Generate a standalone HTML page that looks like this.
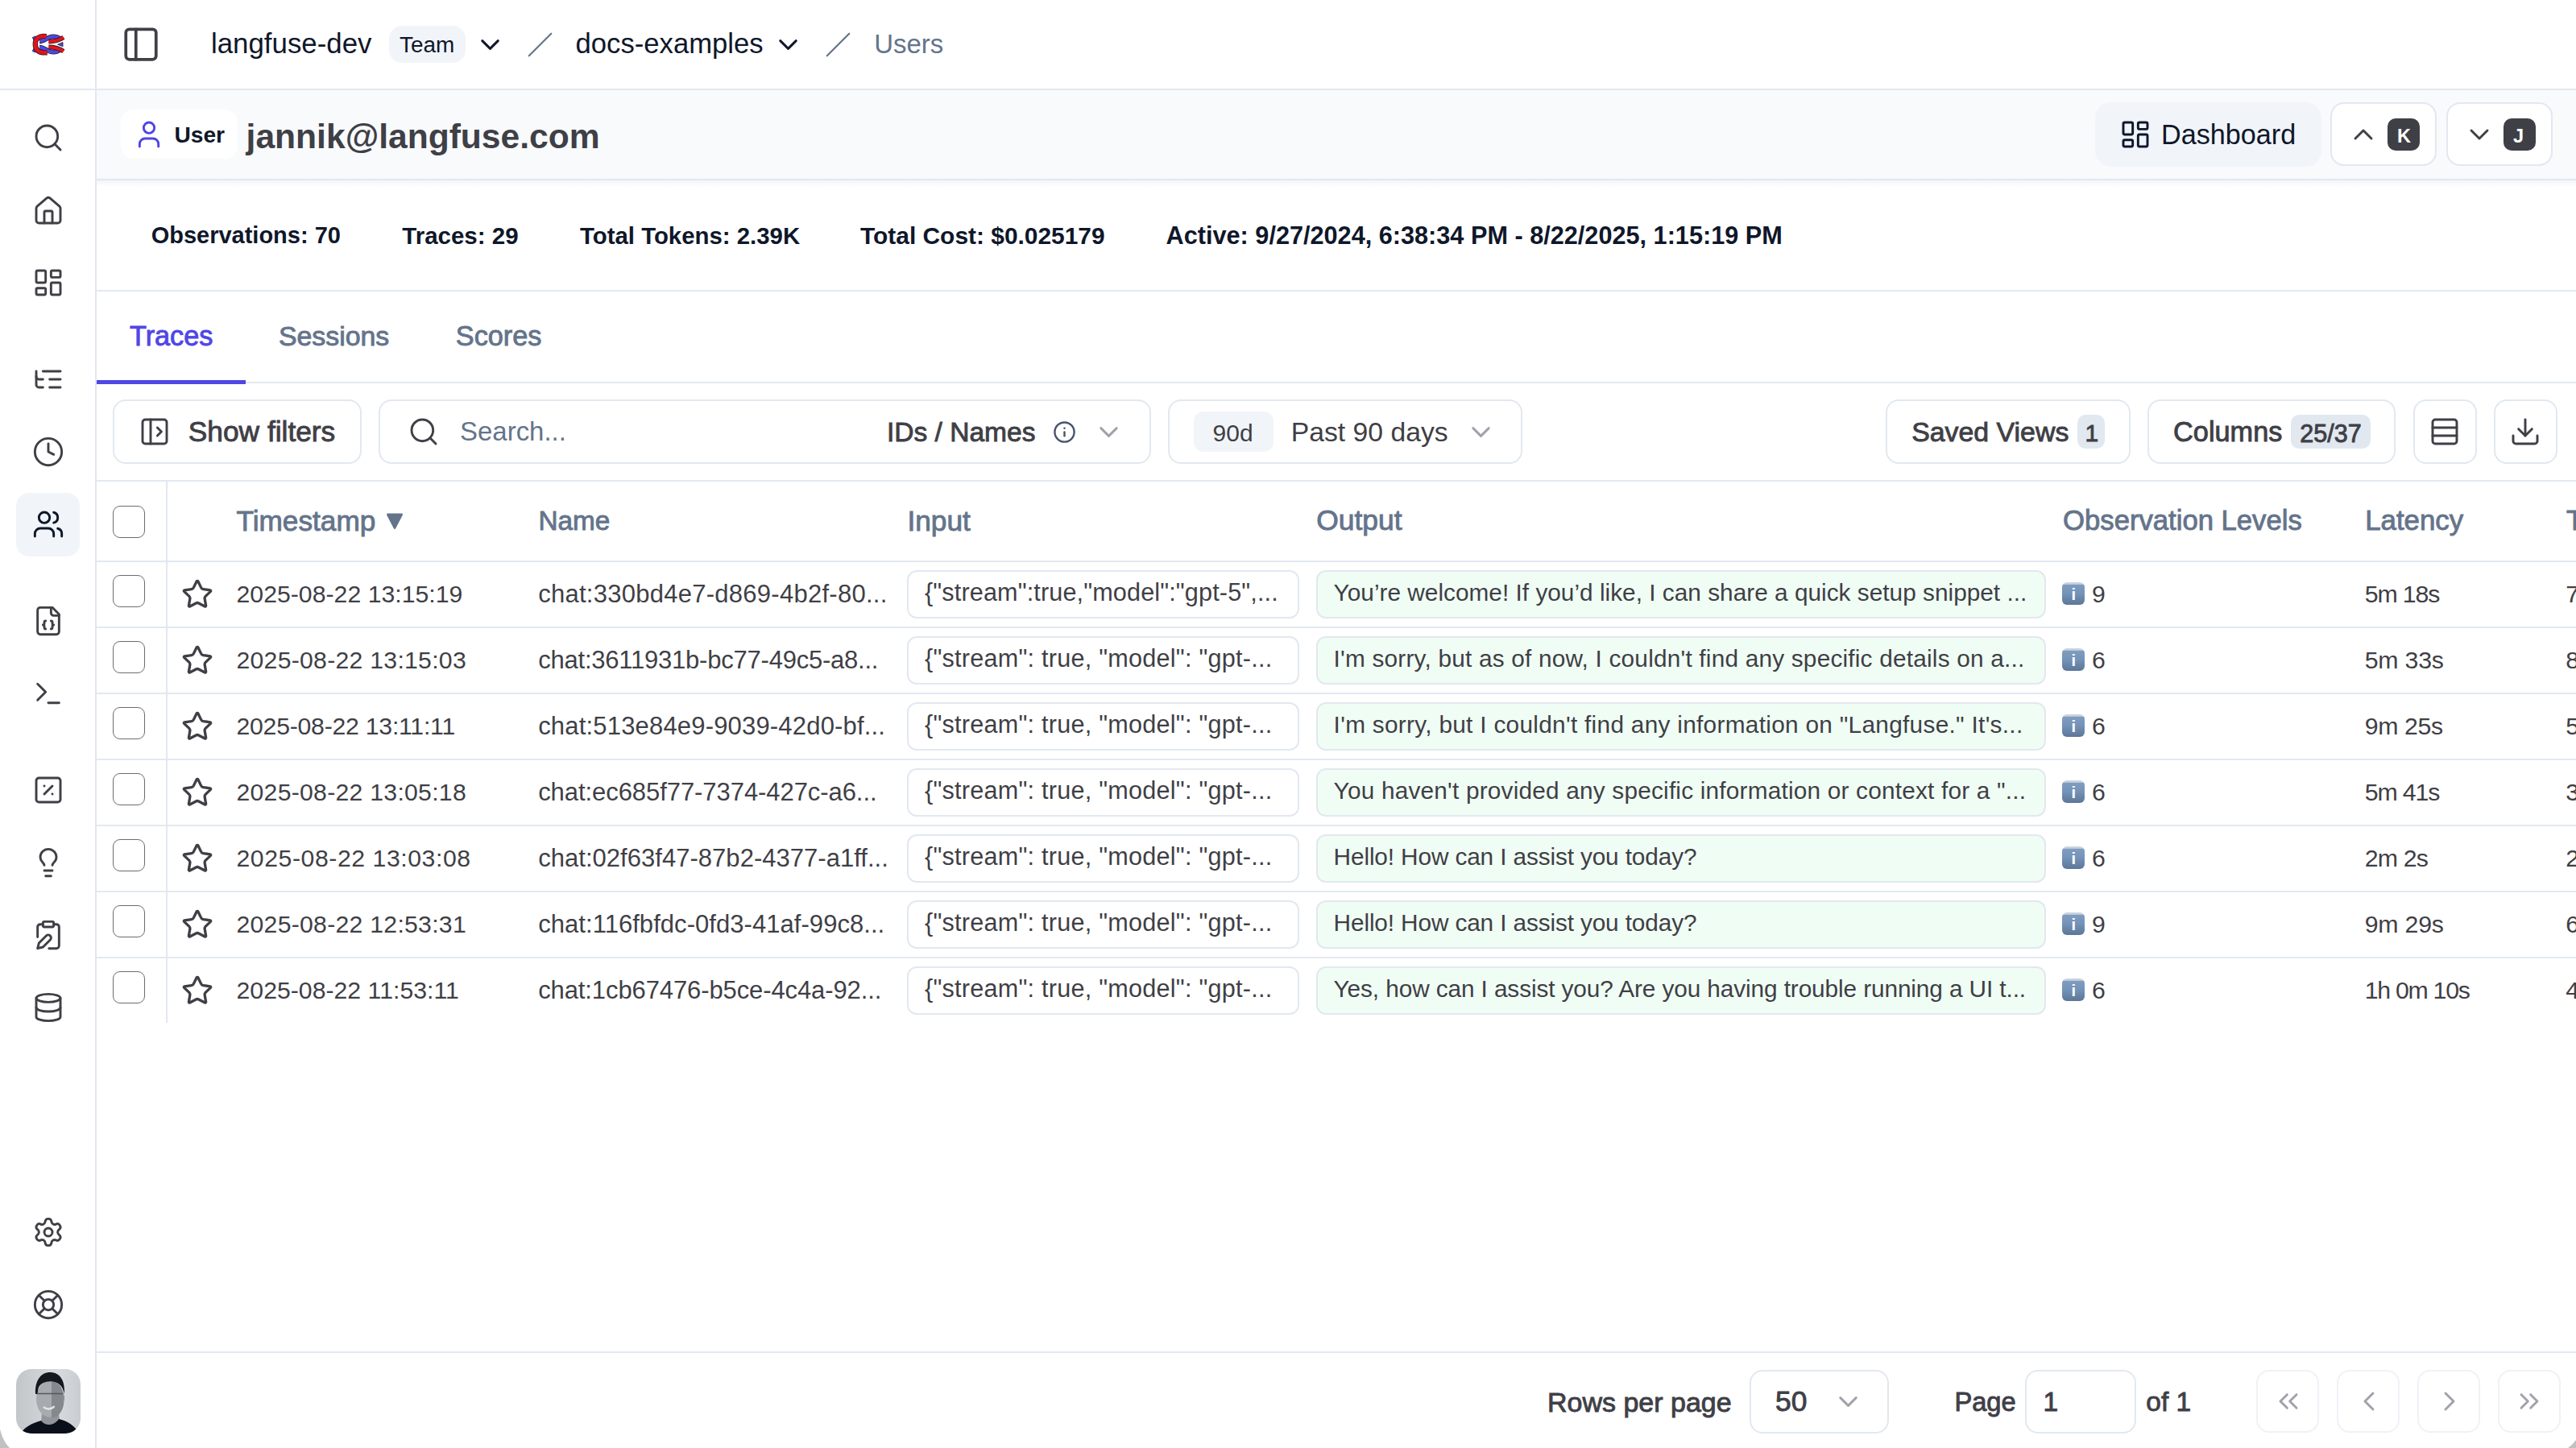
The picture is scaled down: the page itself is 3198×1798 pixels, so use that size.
<!DOCTYPE html>
<html><head><meta charset="utf-8"><title>Langfuse - Users</title>
<style>
html,body{margin:0;padding:0;background:#fff;}
body{width:3198px;height:1798px;position:relative;overflow:hidden;font-family:"Liberation Sans", sans-serif;}
.t{position:absolute;white-space:pre;line-height:1;}
.b{position:absolute;}
.i{position:absolute;overflow:visible;}
@media (max-width:2400px){html{zoom:0.5;}}
</style></head><body>
<div class="b" style="left:118.0px;top:0.0px;width:2.0px;height:1798.0px;background:#e2e8f0"></div>
<div class="b" style="left:0.0px;top:110.0px;width:3198.0px;height:2.0px;background:#e2e8f0"></div>
<div class="b" style="left:120.0px;top:112.0px;width:3078.0px;height:110.0px;background:#f8fafc"></div>
<div class="b" style="left:120.0px;top:222.0px;width:3078.0px;height:2.0px;background:#e2e8f0"></div>
<div class="b" style="left:120.0px;top:224.0px;width:3078.0px;height:8.0px;background:linear-gradient(rgba(226,232,240,0.45),rgba(255,255,255,0))"></div>
<div class="b" style="left:120.0px;top:360.0px;width:3078.0px;height:2.0px;background:#e2e8f0"></div>
<div class="b" style="left:120.0px;top:474.0px;width:3078.0px;height:2.0px;background:#e2e8f0"></div>
<div class="b" style="left:120.0px;top:472.0px;width:185.0px;height:5.0px;background:#4f46e5"></div>
<div class="b" style="left:120.0px;top:596.0px;width:3078.0px;height:2.0px;background:#e2e8f0"></div>
<div class="b" style="left:206.0px;top:598.0px;width:2.0px;height:672.0px;background:#e2e8f0"></div>
<div class="b" style="left:120.0px;top:696.0px;width:3078.0px;height:2.0px;background:#e2e8f0"></div>
<div class="b" style="left:120.0px;top:778.0px;width:3078.0px;height:2.0px;background:#e2e8f0"></div>
<div class="b" style="left:120.0px;top:860.0px;width:3078.0px;height:2.0px;background:#e2e8f0"></div>
<div class="b" style="left:120.0px;top:942.0px;width:3078.0px;height:2.0px;background:#e2e8f0"></div>
<div class="b" style="left:120.0px;top:1024.0px;width:3078.0px;height:2.0px;background:#e2e8f0"></div>
<div class="b" style="left:120.0px;top:1106.0px;width:3078.0px;height:2.0px;background:#e2e8f0"></div>
<div class="b" style="left:120.0px;top:1188.0px;width:3078.0px;height:2.0px;background:#e2e8f0"></div>
<div class="b" style="left:120.0px;top:1678.0px;width:3078.0px;height:2.0px;background:#e2e8f0"></div>
<svg class="i" style="left:40.0px;top:151.0px;" width="40" height="40" viewBox="0 0 24 24" fill="none" stroke="#3f3f46" stroke-width="1.75" stroke-linecap="round" stroke-linejoin="round"><circle cx="11" cy="11" r="8"/><path d="m21 21-4.3-4.3"/></svg>
<svg class="i" style="left:40.0px;top:242.0px;" width="40" height="40" viewBox="0 0 24 24" fill="none" stroke="#3f3f46" stroke-width="1.75" stroke-linecap="round" stroke-linejoin="round"><path d="M15 21v-8a1 1 0 0 0-1-1h-4a1 1 0 0 0-1 1v8"/><path d="M3 10a2 2 0 0 1 .709-1.528l7-5.999a2 2 0 0 1 2.582 0l7 5.999A2 2 0 0 1 21 10v9a2 2 0 0 1-2 2H5a2 2 0 0 1-2-2z"/></svg>
<svg class="i" style="left:40.0px;top:331.0px;" width="40" height="40" viewBox="0 0 24 24" fill="none" stroke="#3f3f46" stroke-width="1.75" stroke-linecap="round" stroke-linejoin="round"><rect width="7" height="9" x="3" y="3" rx="1"/><rect width="7" height="5" x="14" y="3" rx="1"/><rect width="7" height="9" x="14" y="12" rx="1"/><rect width="7" height="5" x="3" y="16" rx="1"/></svg>
<svg class="i" style="left:40.0px;top:451.0px;" width="40" height="40" viewBox="0 0 24 24" fill="none" stroke="#3f3f46" stroke-width="1.75" stroke-linecap="round" stroke-linejoin="round"><path d="M21 12h-8"/><path d="M21 6H8"/><path d="M21 18h-8"/><path d="M3 6v4c0 1.1.9 2 2 2h3"/><path d="M3 10v6c0 1.1.9 2 2 2h3"/></svg>
<svg class="i" style="left:40.0px;top:541.0px;" width="40" height="40" viewBox="0 0 24 24" fill="none" stroke="#3f3f46" stroke-width="1.75" stroke-linecap="round" stroke-linejoin="round"><circle cx="12" cy="12" r="10"/><polyline points="12 6 12 12 16 14"/></svg>
<div class="b" style="left:20.0px;top:612.0px;width:79.0px;height:79.0px;background:#f1f5f9;border-radius:16px"></div>
<svg class="i" style="left:40.0px;top:631.0px;" width="40" height="40" viewBox="0 0 24 24" fill="none" stroke="#0f172a" stroke-width="1.75" stroke-linecap="round" stroke-linejoin="round"><path d="M16 21v-2a4 4 0 0 0-4-4H6a4 4 0 0 0-4 4v2"/><circle cx="9" cy="7" r="4"/><path d="M22 21v-2a4 4 0 0 0-3-3.87"/><path d="M16 3.13a4 4 0 0 1 0 7.75"/></svg>
<svg class="i" style="left:40.0px;top:751.0px;" width="40" height="40" viewBox="0 0 24 24" fill="none" stroke="#3f3f46" stroke-width="1.75" stroke-linecap="round" stroke-linejoin="round"><path d="M15 2H6a2 2 0 0 0-2 2v16a2 2 0 0 0 2 2h12a2 2 0 0 0 2-2V7Z"/><path d="M14 2v4a2 2 0 0 0 2 2h4"/><path d="M10 12a1 1 0 0 0-1 1v1a1 1 0 0 1-1 1 1 1 0 0 1 1 1v1a1 1 0 0 0 1 1"/><path d="M14 18a1 1 0 0 0 1-1v-1a1 1 0 0 1 1-1 1 1 0 0 1-1-1v-1a1 1 0 0 0-1-1"/></svg>
<svg class="i" style="left:40.0px;top:841.0px;" width="40" height="40" viewBox="0 0 24 24" fill="none" stroke="#3f3f46" stroke-width="1.75" stroke-linecap="round" stroke-linejoin="round"><polyline points="4 17 10 11 4 5"/><line x1="12" x2="20" y1="19" y2="19"/></svg>
<svg class="i" style="left:40.0px;top:961.0px;" width="40" height="40" viewBox="0 0 24 24" fill="none" stroke="#3f3f46" stroke-width="1.75" stroke-linecap="round" stroke-linejoin="round"><rect width="18" height="18" x="3" y="3" rx="2"/><path d="m15 9-6 6"/><path d="M9 9h.01"/><path d="M15 15h.01"/></svg>
<svg class="i" style="left:40.0px;top:1051.0px;" width="40" height="40" viewBox="0 0 24 24" fill="none" stroke="#3f3f46" stroke-width="1.75" stroke-linecap="round" stroke-linejoin="round"><path d="M15 14c.2-1 .7-1.7 1.5-2.5 1-.9 1.5-2.2 1.5-3.5A6 6 0 0 0 6 8c0 1 .2 2.2 1.5 3.5.7.7 1.3 1.5 1.5 2.5"/><path d="M9 18h6"/><path d="M10 22h4"/></svg>
<svg class="i" style="left:40.0px;top:1141.0px;" width="40" height="40" viewBox="0 0 24 24" fill="none" stroke="#3f3f46" stroke-width="1.75" stroke-linecap="round" stroke-linejoin="round"><rect width="8" height="4" x="8" y="2" rx="1"/><path d="M10.4 12.6a2 2 0 0 1 3 3L8 21l-4 1 1-4Z"/><path d="M16 4h2a2 2 0 0 1 2 2v14a2 2 0 0 1-2 2h-5.5"/><path d="M4 13.5V6a2 2 0 0 1 2-2h2"/></svg>
<svg class="i" style="left:40.0px;top:1231.0px;" width="40" height="40" viewBox="0 0 24 24" fill="none" stroke="#3f3f46" stroke-width="1.75" stroke-linecap="round" stroke-linejoin="round"><ellipse cx="12" cy="5" rx="9" ry="3"/><path d="M3 5V19A9 3 0 0 0 21 19V5"/><path d="M3 12A9 3 0 0 0 21 12"/></svg>
<svg class="i" style="left:40.0px;top:1510.0px;" width="40" height="40" viewBox="0 0 24 24" fill="none" stroke="#3f3f46" stroke-width="1.75" stroke-linecap="round" stroke-linejoin="round"><path d="M9.671 4.136a2.34 2.34 0 0 1 4.659 0 2.34 2.34 0 0 0 3.319 1.915 2.34 2.34 0 0 1 2.33 4.033 2.34 2.34 0 0 0 0 3.831 2.34 2.34 0 0 1-2.33 4.033 2.34 2.34 0 0 0-3.319 1.915 2.34 2.34 0 0 1-4.659 0 2.34 2.34 0 0 0-3.32-1.915 2.34 2.34 0 0 1-2.33-4.033 2.34 2.34 0 0 0 0-3.831A2.34 2.34 0 0 1 6.35 6.051a2.34 2.34 0 0 0 3.319-1.915"/><circle cx="12" cy="12" r="3"/></svg>
<svg class="i" style="left:40.0px;top:1600.0px;" width="40" height="40" viewBox="0 0 24 24" fill="none" stroke="#3f3f46" stroke-width="1.75" stroke-linecap="round" stroke-linejoin="round"><circle cx="12" cy="12" r="10"/><path d="m4.93 4.93 4.24 4.24"/><path d="m14.83 9.17 4.24-4.24"/><path d="m14.83 14.83 4.24 4.24"/><path d="m9.17 14.83-4.24 4.24"/><circle cx="12" cy="12" r="4"/></svg>
<svg class="i" style="left:150.0px;top:30.0px;" width="50" height="50" viewBox="0 0 24 24" fill="none" stroke="#3f3f46" stroke-width="1.8" stroke-linecap="round" stroke-linejoin="round"><rect width="18" height="18" x="3" y="3" rx="2"/><path d="M9 3v18"/></svg>
<div class="t" style="left:262.0px;top:37.1px;font-size:34.84px;color:#0f172a;font-weight:400;">langfuse-dev</div>
<div class="b" style="left:483.0px;top:32.0px;width:95.0px;height:46.0px;background:#f1f5f9;border-radius:16px"></div>
<div class="t" style="left:496.0px;top:41.9px;font-size:27.93px;color:#0f172a;font-weight:400;">Team</div>
<svg class="i" style="left:588.5px;top:35.5px;" width="39" height="39" viewBox="0 0 24 24" fill="none" stroke="#0f172a" stroke-width="1.8" stroke-linecap="round" stroke-linejoin="round"><path d="m6 9 6 6 6-6"/></svg>
<svg class="i" style="left:654.0px;top:39.0px;" width="33" height="33" viewBox="0 0 24 24" fill="none" stroke="#64748b" stroke-width="1.6" stroke-linecap="round" stroke-linejoin="round"><path d="M22 2 2 22"/></svg>
<div class="t" style="left:714.6px;top:37.3px;font-size:34.65px;color:#0f172a;font-weight:400;">docs-examples</div>
<svg class="i" style="left:958.7px;top:35.5px;" width="39" height="39" viewBox="0 0 24 24" fill="none" stroke="#0f172a" stroke-width="1.8" stroke-linecap="round" stroke-linejoin="round"><path d="m6 9 6 6 6-6"/></svg>
<svg class="i" style="left:1024.0px;top:39.0px;" width="33" height="33" viewBox="0 0 24 24" fill="none" stroke="#64748b" stroke-width="1.6" stroke-linecap="round" stroke-linejoin="round"><path d="M22 2 2 22"/></svg>
<div class="t" style="left:1085.2px;top:38.7px;font-size:32.93px;color:#64748b;font-weight:400;">Users</div>
<div class="b" style="left:150.0px;top:136.0px;width:145.0px;height:61.0px;background:#fff;border-radius:16px"></div>
<svg class="i" style="left:165.0px;top:146.8px;" width="40" height="40" viewBox="0 0 24 24" fill="none" stroke="#4f46e5" stroke-width="1.75" stroke-linecap="round" stroke-linejoin="round"><path d="M19 21v-2a4 4 0 0 0-4-4H9a4 4 0 0 0-4 4v2"/><circle cx="12" cy="7" r="4"/></svg>
<div class="t" style="left:216.5px;top:153.5px;font-size:28.15px;color:#0f172a;font-weight:700;">User</div>
<div class="t" style="left:305.6px;top:147.7px;font-size:42.58px;color:#3f3f46;font-weight:700;">jannik@langfuse.com</div>
<div class="b" style="left:2601.0px;top:127.0px;width:281.0px;height:80.0px;background:#f1f5f9;border-radius:20px"></div>
<svg class="i" style="left:2631.0px;top:147.1px;" width="40" height="40" viewBox="0 0 24 24" fill="none" stroke="#0f172a" stroke-width="1.75" stroke-linecap="round" stroke-linejoin="round"><rect width="7" height="9" x="3" y="3" rx="1"/><rect width="7" height="5" x="14" y="3" rx="1"/><rect width="7" height="9" x="14" y="12" rx="1"/><rect width="7" height="5" x="3" y="16" rx="1"/></svg>
<div class="t" style="left:2683.0px;top:150.3px;font-size:34.20px;color:#0f172a;font-weight:400;">Dashboard</div>
<div class="b" style="left:2893.0px;top:127.0px;width:132.0px;height:79.0px;background:#fff;border:2px solid #e2e8f0;border-radius:17px;box-sizing:border-box"></div>
<svg class="i" style="left:2914.0px;top:147.1px;" width="40" height="40" viewBox="0 0 24 24" fill="none" stroke="#3f3f46" stroke-width="1.75" stroke-linecap="round" stroke-linejoin="round"><path d="m18 15-6-6-6 6"/></svg>
<div class="b" style="left:2964.0px;top:147.0px;width:40.0px;height:40.0px;background:#3f3f46;border-radius:10px"></div>
<div class="t" style="left:2976.0px;top:157.6px;font-size:23.54px;color:#fff;font-weight:700;">K</div>
<div class="b" style="left:3037.0px;top:127.0px;width:132.0px;height:79.0px;background:#fff;border:2px solid #e2e8f0;border-radius:17px;box-sizing:border-box"></div>
<svg class="i" style="left:3058.0px;top:146.8px;" width="40" height="40" viewBox="0 0 24 24" fill="none" stroke="#3f3f46" stroke-width="1.75" stroke-linecap="round" stroke-linejoin="round"><path d="m6 9 6 6 6-6"/></svg>
<div class="b" style="left:3108.0px;top:147.0px;width:40.0px;height:40.0px;background:#3f3f46;border-radius:10px"></div>
<div class="t" style="left:3120.0px;top:157.6px;font-size:23.54px;color:#fff;font-weight:700;">J</div>
<div class="t" style="left:187.7px;top:278.3px;font-size:28.99px;color:#0f172a;font-weight:700;">Observations: 70</div>
<div class="t" style="left:499.3px;top:277.8px;font-size:29.49px;color:#0f172a;font-weight:700;">Traces: 29</div>
<div class="t" style="left:720.0px;top:277.9px;font-size:29.39px;color:#0f172a;font-weight:700;">Total Tokens: 2.39K</div>
<div class="t" style="left:1068.0px;top:277.5px;font-size:29.91px;color:#0f172a;font-weight:700;">Total Cost: $0.025179</div>
<div class="t" style="left:1447.6px;top:276.8px;font-size:30.67px;color:#0f172a;font-weight:700;">Active: 9/27/2024, 6:38:34 PM - 8/22/2025, 1:15:19 PM</div>
<div class="t" style="left:161.0px;top:400.3px;font-size:34.25px;color:#4f46e5;font-weight:400;-webkit-text-stroke:0.9px #4f46e5;">Traces</div>
<div class="t" style="left:345.9px;top:400.6px;font-size:33.86px;color:#64748b;font-weight:400;-webkit-text-stroke:0.9px #64748b;">Sessions</div>
<div class="t" style="left:565.8px;top:400.3px;font-size:34.28px;color:#64748b;font-weight:400;-webkit-text-stroke:0.9px #64748b;">Scores</div>
<div class="b" style="left:140.0px;top:496.0px;width:309.0px;height:80.0px;background:#fff;border:2px solid #e2e8f0;border-radius:16px;box-sizing:border-box"></div>
<svg class="i" style="left:172.0px;top:516.0px;" width="40" height="40" viewBox="0 0 24 24" fill="none" stroke="#3f3f46" stroke-width="1.75" stroke-linecap="round" stroke-linejoin="round"><rect width="18" height="18" x="3" y="3" rx="2"/><path d="M9 3v18"/><path d="m14 9 3 3-3 3"/></svg>
<div class="t" style="left:233.8px;top:518.4px;font-size:35.30px;color:#3f3f46;font-weight:400;-webkit-text-stroke:0.9px #3f3f46;">Show filters</div>
<div class="b" style="left:469.5px;top:496.0px;width:959.0px;height:80.0px;background:#fff;border:2px solid #e2e8f0;border-radius:16px;box-sizing:border-box"></div>
<svg class="i" style="left:505.9px;top:515.9px;" width="40" height="40" viewBox="0 0 24 24" fill="none" stroke="#3f3f46" stroke-width="1.75" stroke-linecap="round" stroke-linejoin="round"><circle cx="11" cy="11" r="8"/><path d="m21 21-4.3-4.3"/></svg>
<div class="t" style="left:571.1px;top:520.4px;font-size:32.93px;color:#64748b;font-weight:400;">Search...</div>
<div class="t" style="left:1101.0px;top:519.9px;font-size:33.54px;color:#3f3f46;font-weight:400;-webkit-text-stroke:0.9px #3f3f46;">IDs / Names</div>
<svg class="i" style="left:1307.2px;top:522.1px;" width="29" height="29" viewBox="0 0 24 24" fill="none" stroke="#475569" stroke-width="2" stroke-linecap="round" stroke-linejoin="round"><circle cx="12" cy="12" r="10"/><path d="M12 16v-4"/><path d="M12 8h.01"/></svg>
<svg class="i" style="left:1357.3px;top:517.0px;" width="39" height="39" viewBox="0 0 24 24" fill="none" stroke="#a1a1aa" stroke-width="1.75" stroke-linecap="round" stroke-linejoin="round"><path d="m6 9 6 6 6-6"/></svg>
<div class="b" style="left:1450.0px;top:496.0px;width:440.0px;height:80.0px;background:#fff;border:2px solid #e2e8f0;border-radius:16px;box-sizing:border-box"></div>
<div class="b" style="left:1481.5px;top:511.0px;width:99.0px;height:50.0px;background:#f1f5f9;border-radius:12px"></div>
<div class="t" style="left:1505.6px;top:522.9px;font-size:29.97px;color:#3f3f46;font-weight:400;">90d</div>
<div class="t" style="left:1602.7px;top:519.7px;font-size:33.73px;color:#3f3f46;font-weight:400;">Past 90 days</div>
<svg class="i" style="left:1818.5px;top:517.0px;" width="39" height="39" viewBox="0 0 24 24" fill="none" stroke="#a1a1aa" stroke-width="1.75" stroke-linecap="round" stroke-linejoin="round"><path d="m6 9 6 6 6-6"/></svg>
<div class="b" style="left:2341.0px;top:496.0px;width:304.0px;height:80.0px;background:#fff;border:2px solid #e2e8f0;border-radius:16px;box-sizing:border-box"></div>
<div class="t" style="left:2373.2px;top:519.6px;font-size:33.87px;color:#3f3f46;font-weight:400;-webkit-text-stroke:0.9px #3f3f46;">Saved Views</div>
<div class="b" style="left:2579.0px;top:515.0px;width:34.0px;height:42.0px;background:#e2e8f0;border-radius:10px"></div>
<div class="t" style="left:2588.6px;top:522.9px;font-size:30.00px;color:#3f3f46;font-weight:400;-webkit-text-stroke:0.9px #3f3f46;">1</div>
<div class="b" style="left:2666.0px;top:496.0px;width:308.0px;height:80.0px;background:#fff;border:2px solid #e2e8f0;border-radius:16px;box-sizing:border-box"></div>
<div class="t" style="left:2698.1px;top:519.3px;font-size:34.29px;color:#3f3f46;font-weight:400;-webkit-text-stroke:0.9px #3f3f46;">Columns</div>
<div class="b" style="left:2844.0px;top:515.0px;width:99.0px;height:42.0px;background:#e2e8f0;border-radius:10px"></div>
<div class="t" style="left:2855.3px;top:522.5px;font-size:30.53px;color:#3f3f46;font-weight:400;-webkit-text-stroke:0.9px #3f3f46;">25/37</div>
<div class="b" style="left:2995.5px;top:496.0px;width:79.0px;height:80.0px;background:#fff;border:2px solid #e2e8f0;border-radius:16px;box-sizing:border-box"></div>
<svg class="i" style="left:3015.0px;top:516.0px;" width="40" height="40" viewBox="0 0 24 24" fill="none" stroke="#3f3f46" stroke-width="1.75" stroke-linecap="round" stroke-linejoin="round"><rect width="18" height="18" x="3" y="3" rx="2"/><path d="M21 9H3"/><path d="M21 15H3"/></svg>
<div class="b" style="left:3096.0px;top:496.0px;width:79.0px;height:80.0px;background:#fff;border:2px solid #e2e8f0;border-radius:16px;box-sizing:border-box"></div>
<svg class="i" style="left:3115.0px;top:516.0px;" width="40" height="40" viewBox="0 0 24 24" fill="none" stroke="#3f3f46" stroke-width="1.75" stroke-linecap="round" stroke-linejoin="round"><path d="M21 15v4a2 2 0 0 1-2 2H5a2 2 0 0 1-2-2v-4"/><polyline points="7 10 12 15 17 10"/><line x1="12" x2="12" y1="15" y2="3"/></svg>
<div class="b" style="left:140.0px;top:627.5px;width:40.0px;height:40.0px;border:1.6px solid #6b6b74;border-radius:9px;box-sizing:border-box;background:#fff"></div>
<div class="t" style="left:293.5px;top:628.7px;font-size:35.21px;color:#64748b;font-weight:400;-webkit-text-stroke:0.9px #64748b;">Timestamp</div>
<svg class="i" style="left:479px;top:637px" width="22" height="20" viewBox="0 0 22 20"><path d="M2.3 1.8 H19.7 L11 18.6 Z" fill="#64748b" stroke="#64748b" stroke-width="2.6" stroke-linejoin="round"/></svg>
<div class="t" style="left:668.5px;top:630.3px;font-size:33.33px;color:#64748b;font-weight:400;-webkit-text-stroke:0.9px #64748b;">Name</div>
<div class="t" style="left:1126.4px;top:628.7px;font-size:35.25px;color:#64748b;font-weight:400;-webkit-text-stroke:0.9px #64748b;">Input</div>
<div class="t" style="left:1634.2px;top:628.5px;font-size:35.41px;color:#64748b;font-weight:400;-webkit-text-stroke:0.9px #64748b;">Output</div>
<div class="t" style="left:2561.1px;top:629.1px;font-size:34.67px;color:#64748b;font-weight:400;-webkit-text-stroke:0.9px #64748b;">Observation Levels</div>
<div class="t" style="left:2936.2px;top:629.0px;font-size:34.83px;color:#64748b;font-weight:400;-webkit-text-stroke:0.9px #64748b;">Latency</div>
<div class="t" style="left:3186.0px;top:629.0px;font-size:34.83px;color:#64748b;font-weight:400;-webkit-text-stroke:0.9px #64748b;">T</div>
<div class="b" style="left:140.0px;top:714.0px;width:40.0px;height:40.0px;border:1.6px solid #6b6b74;border-radius:9px;box-sizing:border-box;background:#fff"></div>
<svg class="i" style="left:224.8px;top:717.8px;" width="40" height="40" viewBox="0 0 24 24" fill="none" stroke="#3f3f46" stroke-width="2" stroke-linecap="round" stroke-linejoin="round"><path d="M11.525 2.295a.53.53 0 0 1 .95 0l2.31 4.679a2.123 2.123 0 0 0 1.595 1.16l5.166.756a.53.53 0 0 1 .294.904l-3.736 3.638a2.123 2.123 0 0 0-.611 1.878l.882 5.14a.53.53 0 0 1-.771.56l-4.618-2.428a2.122 2.122 0 0 0-1.973 0L6.396 21.01a.53.53 0 0 1-.77-.56l.881-5.139a2.122 2.122 0 0 0-.611-1.879L2.16 9.795a.53.53 0 0 1 .294-.906l5.165-.755a2.122 2.122 0 0 0 1.597-1.16z"/></svg>
<div class="t" style="left:293.5px;top:722.7px;font-size:30.20px;color:#3f3f46;font-weight:400;letter-spacing:0.032px;">2025-08-22 13:15:19</div>
<div class="t" style="left:668.2px;top:722.1px;font-size:31.00px;color:#3f3f46;font-weight:400;letter-spacing:0.263px;">chat:330bd4e7-d869-4b2f-80...</div>
<div class="b" style="left:1125.7px;top:708.3px;width:487.0px;height:59.4px;background:#fff;border:2px solid #e2e8f0;border-radius:12px;box-sizing:border-box"></div>
<div class="t" style="left:1148.0px;top:720.1px;font-size:30.60px;color:#3f3f46;font-weight:400;letter-spacing:0.138px;">{&quot;stream&quot;:true,&quot;model&quot;:&quot;gpt-5&quot;,...</div>
<div class="b" style="left:1633.5px;top:708.3px;width:906.0px;height:59.4px;background:#f0fdf4;border:2px solid #e2e8f0;border-radius:12px;box-sizing:border-box"></div>
<div class="t" style="left:1655.6px;top:720.8px;font-size:29.80px;color:#3f3f46;font-weight:400;letter-spacing:0.008px;">You’re welcome! If you’d like, I can share a quick setup snippet ...</div>
<div class="b" style="left:2560.3px;top:723.0px;width:28.0px;height:28.0px;background:linear-gradient(#c9d3de 0,#c9d3de 8%,#7f9cc0 12%,#7393b8 50%,#5c7697 100%);border-radius:6px"></div>
<div class="t" style="left:2571.5px;top:728.1px;font-size:20.00px;color:#fff;font-weight:700;">i</div>
<div class="t" style="left:2597.0px;top:722.7px;font-size:30.20px;color:#3f3f46;font-weight:400;">9</div>
<div class="t" style="left:2935.7px;top:722.6px;font-size:30.30px;color:#3f3f46;font-weight:400;letter-spacing:-1.133px;">5m 18s</div>
<div class="t" style="left:3185.3px;top:722.7px;font-size:30.20px;color:#3f3f46;font-weight:400;">7</div>
<div class="b" style="left:140.0px;top:796.0px;width:40.0px;height:40.0px;border:1.6px solid #6b6b74;border-radius:9px;box-sizing:border-box;background:#fff"></div>
<svg class="i" style="left:224.8px;top:799.8px;" width="40" height="40" viewBox="0 0 24 24" fill="none" stroke="#3f3f46" stroke-width="2" stroke-linecap="round" stroke-linejoin="round"><path d="M11.525 2.295a.53.53 0 0 1 .95 0l2.31 4.679a2.123 2.123 0 0 0 1.595 1.16l5.166.756a.53.53 0 0 1 .294.904l-3.736 3.638a2.123 2.123 0 0 0-.611 1.878l.882 5.14a.53.53 0 0 1-.771.56l-4.618-2.428a2.122 2.122 0 0 0-1.973 0L6.396 21.01a.53.53 0 0 1-.77-.56l.881-5.139a2.122 2.122 0 0 0-.611-1.879L2.16 9.795a.53.53 0 0 1 .294-.906l5.165-.755a2.122 2.122 0 0 0 1.597-1.16z"/></svg>
<div class="t" style="left:293.5px;top:804.7px;font-size:30.20px;color:#3f3f46;font-weight:400;letter-spacing:0.271px;">2025-08-22 13:15:03</div>
<div class="t" style="left:668.2px;top:804.1px;font-size:31.00px;color:#3f3f46;font-weight:400;letter-spacing:-0.224px;">chat:3611931b-bc77-49c5-a8...</div>
<div class="b" style="left:1125.7px;top:790.3px;width:487.0px;height:59.4px;background:#fff;border:2px solid #e2e8f0;border-radius:12px;box-sizing:border-box"></div>
<div class="t" style="left:1148.0px;top:802.1px;font-size:30.60px;color:#3f3f46;font-weight:400;letter-spacing:0.240px;">{&quot;stream&quot;: true, &quot;model&quot;: &quot;gpt-...</div>
<div class="b" style="left:1633.5px;top:790.3px;width:906.0px;height:59.4px;background:#f0fdf4;border:2px solid #e2e8f0;border-radius:12px;box-sizing:border-box"></div>
<div class="t" style="left:1655.6px;top:802.8px;font-size:29.80px;color:#3f3f46;font-weight:400;letter-spacing:0.199px;">I&#x27;m sorry, but as of now, I couldn&#x27;t find any specific details on a...</div>
<div class="b" style="left:2560.3px;top:805.0px;width:28.0px;height:28.0px;background:linear-gradient(#c9d3de 0,#c9d3de 8%,#7f9cc0 12%,#7393b8 50%,#5c7697 100%);border-radius:6px"></div>
<div class="t" style="left:2571.5px;top:810.1px;font-size:20.00px;color:#fff;font-weight:700;">i</div>
<div class="t" style="left:2597.0px;top:804.7px;font-size:30.20px;color:#3f3f46;font-weight:400;">6</div>
<div class="t" style="left:2935.7px;top:804.6px;font-size:30.30px;color:#3f3f46;font-weight:400;letter-spacing:-0.213px;">5m 33s</div>
<div class="t" style="left:3185.3px;top:804.7px;font-size:30.20px;color:#3f3f46;font-weight:400;">8</div>
<div class="b" style="left:140.0px;top:878.0px;width:40.0px;height:40.0px;border:1.6px solid #6b6b74;border-radius:9px;box-sizing:border-box;background:#fff"></div>
<svg class="i" style="left:224.8px;top:881.8px;" width="40" height="40" viewBox="0 0 24 24" fill="none" stroke="#3f3f46" stroke-width="2" stroke-linecap="round" stroke-linejoin="round"><path d="M11.525 2.295a.53.53 0 0 1 .95 0l2.31 4.679a2.123 2.123 0 0 0 1.595 1.16l5.166.756a.53.53 0 0 1 .294.904l-3.736 3.638a2.123 2.123 0 0 0-.611 1.878l.882 5.14a.53.53 0 0 1-.771.56l-4.618-2.428a2.122 2.122 0 0 0-1.973 0L6.396 21.01a.53.53 0 0 1-.77-.56l.881-5.139a2.122 2.122 0 0 0-.611-1.879L2.16 9.795a.53.53 0 0 1 .294-.906l5.165-.755a2.122 2.122 0 0 0 1.597-1.16z"/></svg>
<div class="t" style="left:293.5px;top:886.7px;font-size:30.20px;color:#3f3f46;font-weight:400;letter-spacing:-0.230px;">2025-08-22 13:11:11</div>
<div class="t" style="left:668.2px;top:886.1px;font-size:31.00px;color:#3f3f46;font-weight:400;letter-spacing:0.181px;">chat:513e84e9-9039-42d0-bf...</div>
<div class="b" style="left:1125.7px;top:872.3px;width:487.0px;height:59.4px;background:#fff;border:2px solid #e2e8f0;border-radius:12px;box-sizing:border-box"></div>
<div class="t" style="left:1148.0px;top:884.1px;font-size:30.60px;color:#3f3f46;font-weight:400;letter-spacing:0.240px;">{&quot;stream&quot;: true, &quot;model&quot;: &quot;gpt-...</div>
<div class="b" style="left:1633.5px;top:872.3px;width:906.0px;height:59.4px;background:#f0fdf4;border:2px solid #e2e8f0;border-radius:12px;box-sizing:border-box"></div>
<div class="t" style="left:1655.6px;top:884.8px;font-size:29.80px;color:#3f3f46;font-weight:400;letter-spacing:0.289px;">I&#x27;m sorry, but I couldn&#x27;t find any information on &quot;Langfuse.&quot; It&#x27;s...</div>
<div class="b" style="left:2560.3px;top:887.0px;width:28.0px;height:28.0px;background:linear-gradient(#c9d3de 0,#c9d3de 8%,#7f9cc0 12%,#7393b8 50%,#5c7697 100%);border-radius:6px"></div>
<div class="t" style="left:2571.5px;top:892.1px;font-size:20.00px;color:#fff;font-weight:700;">i</div>
<div class="t" style="left:2597.0px;top:886.7px;font-size:30.20px;color:#3f3f46;font-weight:400;">6</div>
<div class="t" style="left:2935.7px;top:886.6px;font-size:30.30px;color:#3f3f46;font-weight:400;letter-spacing:-0.373px;">9m 25s</div>
<div class="t" style="left:3185.3px;top:886.7px;font-size:30.20px;color:#3f3f46;font-weight:400;">5</div>
<div class="b" style="left:140.0px;top:960.0px;width:40.0px;height:40.0px;border:1.6px solid #6b6b74;border-radius:9px;box-sizing:border-box;background:#fff"></div>
<svg class="i" style="left:224.8px;top:963.8px;" width="40" height="40" viewBox="0 0 24 24" fill="none" stroke="#3f3f46" stroke-width="2" stroke-linecap="round" stroke-linejoin="round"><path d="M11.525 2.295a.53.53 0 0 1 .95 0l2.31 4.679a2.123 2.123 0 0 0 1.595 1.16l5.166.756a.53.53 0 0 1 .294.904l-3.736 3.638a2.123 2.123 0 0 0-.611 1.878l.882 5.14a.53.53 0 0 1-.771.56l-4.618-2.428a2.122 2.122 0 0 0-1.973 0L6.396 21.01a.53.53 0 0 1-.77-.56l.881-5.139a2.122 2.122 0 0 0-.611-1.879L2.16 9.795a.53.53 0 0 1 .294-.906l5.165-.755a2.122 2.122 0 0 0 1.597-1.16z"/></svg>
<div class="t" style="left:293.5px;top:968.7px;font-size:30.20px;color:#3f3f46;font-weight:400;letter-spacing:0.271px;">2025-08-22 13:05:18</div>
<div class="t" style="left:668.2px;top:968.1px;font-size:31.00px;color:#3f3f46;font-weight:400;letter-spacing:-0.066px;">chat:ec685f77-7374-427c-a6...</div>
<div class="b" style="left:1125.7px;top:954.3px;width:487.0px;height:59.4px;background:#fff;border:2px solid #e2e8f0;border-radius:12px;box-sizing:border-box"></div>
<div class="t" style="left:1148.0px;top:966.1px;font-size:30.60px;color:#3f3f46;font-weight:400;letter-spacing:0.240px;">{&quot;stream&quot;: true, &quot;model&quot;: &quot;gpt-...</div>
<div class="b" style="left:1633.5px;top:954.3px;width:906.0px;height:59.4px;background:#f0fdf4;border:2px solid #e2e8f0;border-radius:12px;box-sizing:border-box"></div>
<div class="t" style="left:1655.6px;top:966.8px;font-size:29.80px;color:#3f3f46;font-weight:400;letter-spacing:0.195px;">You haven&#x27;t provided any specific information or context for a &quot;...</div>
<div class="b" style="left:2560.3px;top:969.0px;width:28.0px;height:28.0px;background:linear-gradient(#c9d3de 0,#c9d3de 8%,#7f9cc0 12%,#7393b8 50%,#5c7697 100%);border-radius:6px"></div>
<div class="t" style="left:2571.5px;top:974.1px;font-size:20.00px;color:#fff;font-weight:700;">i</div>
<div class="t" style="left:2597.0px;top:968.7px;font-size:30.20px;color:#3f3f46;font-weight:400;">6</div>
<div class="t" style="left:2935.7px;top:968.6px;font-size:30.30px;color:#3f3f46;font-weight:400;letter-spacing:-1.133px;">5m 41s</div>
<div class="t" style="left:3185.3px;top:968.7px;font-size:30.20px;color:#3f3f46;font-weight:400;">3</div>
<div class="b" style="left:140.0px;top:1042.0px;width:40.0px;height:40.0px;border:1.6px solid #6b6b74;border-radius:9px;box-sizing:border-box;background:#fff"></div>
<svg class="i" style="left:224.8px;top:1045.8px;" width="40" height="40" viewBox="0 0 24 24" fill="none" stroke="#3f3f46" stroke-width="2" stroke-linecap="round" stroke-linejoin="round"><path d="M11.525 2.295a.53.53 0 0 1 .95 0l2.31 4.679a2.123 2.123 0 0 0 1.595 1.16l5.166.756a.53.53 0 0 1 .294.904l-3.736 3.638a2.123 2.123 0 0 0-.611 1.878l.882 5.14a.53.53 0 0 1-.771.56l-4.618-2.428a2.122 2.122 0 0 0-1.973 0L6.396 21.01a.53.53 0 0 1-.77-.56l.881-5.139a2.122 2.122 0 0 0-.611-1.879L2.16 9.795a.53.53 0 0 1 .294-.906l5.165-.755a2.122 2.122 0 0 0 1.597-1.16z"/></svg>
<div class="t" style="left:293.5px;top:1050.7px;font-size:30.20px;color:#3f3f46;font-weight:400;letter-spacing:0.571px;">2025-08-22 13:03:08</div>
<div class="t" style="left:668.2px;top:1050.1px;font-size:31.00px;color:#3f3f46;font-weight:400;letter-spacing:0.031px;">chat:02f63f47-87b2-4377-a1ff...</div>
<div class="b" style="left:1125.7px;top:1036.3px;width:487.0px;height:59.4px;background:#fff;border:2px solid #e2e8f0;border-radius:12px;box-sizing:border-box"></div>
<div class="t" style="left:1148.0px;top:1048.1px;font-size:30.60px;color:#3f3f46;font-weight:400;letter-spacing:0.240px;">{&quot;stream&quot;: true, &quot;model&quot;: &quot;gpt-...</div>
<div class="b" style="left:1633.5px;top:1036.3px;width:906.0px;height:59.4px;background:#f0fdf4;border:2px solid #e2e8f0;border-radius:12px;box-sizing:border-box"></div>
<div class="t" style="left:1655.6px;top:1048.8px;font-size:29.80px;color:#3f3f46;font-weight:400;letter-spacing:-0.139px;">Hello! How can I assist you today?</div>
<div class="b" style="left:2560.3px;top:1051.0px;width:28.0px;height:28.0px;background:linear-gradient(#c9d3de 0,#c9d3de 8%,#7f9cc0 12%,#7393b8 50%,#5c7697 100%);border-radius:6px"></div>
<div class="t" style="left:2571.5px;top:1056.1px;font-size:20.00px;color:#fff;font-weight:700;">i</div>
<div class="t" style="left:2597.0px;top:1050.7px;font-size:30.20px;color:#3f3f46;font-weight:400;">6</div>
<div class="t" style="left:2935.7px;top:1050.6px;font-size:30.30px;color:#3f3f46;font-weight:400;letter-spacing:-0.804px;">2m 2s</div>
<div class="t" style="left:3185.3px;top:1050.7px;font-size:30.20px;color:#3f3f46;font-weight:400;">2</div>
<div class="b" style="left:140.0px;top:1124.0px;width:40.0px;height:40.0px;border:1.6px solid #6b6b74;border-radius:9px;box-sizing:border-box;background:#fff"></div>
<svg class="i" style="left:224.8px;top:1127.8px;" width="40" height="40" viewBox="0 0 24 24" fill="none" stroke="#3f3f46" stroke-width="2" stroke-linecap="round" stroke-linejoin="round"><path d="M11.525 2.295a.53.53 0 0 1 .95 0l2.31 4.679a2.123 2.123 0 0 0 1.595 1.16l5.166.756a.53.53 0 0 1 .294.904l-3.736 3.638a2.123 2.123 0 0 0-.611 1.878l.882 5.14a.53.53 0 0 1-.771.56l-4.618-2.428a2.122 2.122 0 0 0-1.973 0L6.396 21.01a.53.53 0 0 1-.77-.56l.881-5.139a2.122 2.122 0 0 0-.611-1.879L2.16 9.795a.53.53 0 0 1 .294-.906l5.165-.755a2.122 2.122 0 0 0 1.597-1.16z"/></svg>
<div class="t" style="left:293.5px;top:1132.7px;font-size:30.20px;color:#3f3f46;font-weight:400;letter-spacing:0.271px;">2025-08-22 12:53:31</div>
<div class="t" style="left:668.2px;top:1132.1px;font-size:31.00px;color:#3f3f46;font-weight:400;letter-spacing:0.049px;">chat:116fbfdc-0fd3-41af-99c8...</div>
<div class="b" style="left:1125.7px;top:1118.3px;width:487.0px;height:59.4px;background:#fff;border:2px solid #e2e8f0;border-radius:12px;box-sizing:border-box"></div>
<div class="t" style="left:1148.0px;top:1130.1px;font-size:30.60px;color:#3f3f46;font-weight:400;letter-spacing:0.240px;">{&quot;stream&quot;: true, &quot;model&quot;: &quot;gpt-...</div>
<div class="b" style="left:1633.5px;top:1118.3px;width:906.0px;height:59.4px;background:#f0fdf4;border:2px solid #e2e8f0;border-radius:12px;box-sizing:border-box"></div>
<div class="t" style="left:1655.6px;top:1130.8px;font-size:29.80px;color:#3f3f46;font-weight:400;letter-spacing:-0.139px;">Hello! How can I assist you today?</div>
<div class="b" style="left:2560.3px;top:1133.0px;width:28.0px;height:28.0px;background:linear-gradient(#c9d3de 0,#c9d3de 8%,#7f9cc0 12%,#7393b8 50%,#5c7697 100%);border-radius:6px"></div>
<div class="t" style="left:2571.5px;top:1138.1px;font-size:20.00px;color:#fff;font-weight:700;">i</div>
<div class="t" style="left:2597.0px;top:1132.7px;font-size:30.20px;color:#3f3f46;font-weight:400;">9</div>
<div class="t" style="left:2935.7px;top:1132.6px;font-size:30.30px;color:#3f3f46;font-weight:400;letter-spacing:-0.213px;">9m 29s</div>
<div class="t" style="left:3185.3px;top:1132.7px;font-size:30.20px;color:#3f3f46;font-weight:400;">6</div>
<div class="b" style="left:140.0px;top:1206.0px;width:40.0px;height:40.0px;border:1.6px solid #6b6b74;border-radius:9px;box-sizing:border-box;background:#fff"></div>
<svg class="i" style="left:224.8px;top:1209.8px;" width="40" height="40" viewBox="0 0 24 24" fill="none" stroke="#3f3f46" stroke-width="2" stroke-linecap="round" stroke-linejoin="round"><path d="M11.525 2.295a.53.53 0 0 1 .95 0l2.31 4.679a2.123 2.123 0 0 0 1.595 1.16l5.166.756a.53.53 0 0 1 .294.904l-3.736 3.638a2.123 2.123 0 0 0-.611 1.878l.882 5.14a.53.53 0 0 1-.771.56l-4.618-2.428a2.122 2.122 0 0 0-1.973 0L6.396 21.01a.53.53 0 0 1-.77-.56l.881-5.139a2.122 2.122 0 0 0-.611-1.879L2.16 9.795a.53.53 0 0 1 .294-.906l5.165-.755a2.122 2.122 0 0 0 1.597-1.16z"/></svg>
<div class="t" style="left:293.5px;top:1214.7px;font-size:30.20px;color:#3f3f46;font-weight:400;letter-spacing:0.025px;">2025-08-22 11:53:11</div>
<div class="t" style="left:668.2px;top:1214.1px;font-size:31.00px;color:#3f3f46;font-weight:400;letter-spacing:-0.105px;">chat:1cb67476-b5ce-4c4a-92...</div>
<div class="b" style="left:1125.7px;top:1200.3px;width:487.0px;height:59.4px;background:#fff;border:2px solid #e2e8f0;border-radius:12px;box-sizing:border-box"></div>
<div class="t" style="left:1148.0px;top:1212.1px;font-size:30.60px;color:#3f3f46;font-weight:400;letter-spacing:0.240px;">{&quot;stream&quot;: true, &quot;model&quot;: &quot;gpt-...</div>
<div class="b" style="left:1633.5px;top:1200.3px;width:906.0px;height:59.4px;background:#f0fdf4;border:2px solid #e2e8f0;border-radius:12px;box-sizing:border-box"></div>
<div class="t" style="left:1655.6px;top:1212.8px;font-size:29.80px;color:#3f3f46;font-weight:400;letter-spacing:-0.111px;">Yes, how can I assist you? Are you having trouble running a UI t...</div>
<div class="b" style="left:2560.3px;top:1215.0px;width:28.0px;height:28.0px;background:linear-gradient(#c9d3de 0,#c9d3de 8%,#7f9cc0 12%,#7393b8 50%,#5c7697 100%);border-radius:6px"></div>
<div class="t" style="left:2571.5px;top:1220.1px;font-size:20.00px;color:#fff;font-weight:700;">i</div>
<div class="t" style="left:2597.0px;top:1214.7px;font-size:30.20px;color:#3f3f46;font-weight:400;">6</div>
<div class="t" style="left:2935.7px;top:1214.6px;font-size:30.30px;color:#3f3f46;font-weight:400;letter-spacing:-1.286px;">1h 0m 10s</div>
<div class="t" style="left:3185.3px;top:1214.7px;font-size:30.20px;color:#3f3f46;font-weight:400;">4</div>
<div class="t" style="left:1921.0px;top:1723.7px;font-size:34.00px;color:#3f3f46;font-weight:400;-webkit-text-stroke:0.9px #3f3f46;">Rows per page</div>
<div class="b" style="left:2172.0px;top:1701.0px;width:173.0px;height:79.0px;background:#fff;border:2px solid #e2e8f0;border-radius:16px;box-sizing:border-box"></div>
<div class="t" style="left:2204.0px;top:1722.5px;font-size:35.40px;color:#3f3f46;font-weight:400;-webkit-text-stroke:0.9px #3f3f46;">50</div>
<svg class="i" style="left:2274.5px;top:1720.5px;" width="39" height="39" viewBox="0 0 24 24" fill="none" stroke="#a1a1aa" stroke-width="1.75" stroke-linecap="round" stroke-linejoin="round"><path d="m6 9 6 6 6-6"/></svg>
<div class="t" style="left:2426.4px;top:1724.8px;font-size:32.67px;color:#3f3f46;font-weight:400;-webkit-text-stroke:0.9px #3f3f46;">Page</div>
<div class="b" style="left:2514.4px;top:1701.0px;width:138.0px;height:79.0px;background:#fff;border:2px solid #e2e8f0;border-radius:16px;box-sizing:border-box"></div>
<div class="t" style="left:2536.4px;top:1724.1px;font-size:33.50px;color:#3f3f46;font-weight:400;-webkit-text-stroke:0.9px #3f3f46;">1</div>
<div class="t" style="left:2664.3px;top:1724.2px;font-size:33.45px;color:#3f3f46;font-weight:400;-webkit-text-stroke:0.9px #3f3f46;">of 1</div>
<div class="b" style="left:2801.0px;top:1701.0px;width:78.0px;height:78.0px;background:#fff;border:2px solid #eef2f6;border-radius:16px;box-sizing:border-box"></div>
<svg class="i" style="left:2820.6px;top:1720.0px;" width="40" height="40" viewBox="0 0 24 24" fill="none" stroke="#a1a1aa" stroke-width="1.75" stroke-linecap="round" stroke-linejoin="round"><path d="m11 17-5-5 5-5"/><path d="m18 17-5-5 5-5"/></svg>
<div class="b" style="left:2901.0px;top:1701.0px;width:78.0px;height:78.0px;background:#fff;border:2px solid #eef2f6;border-radius:16px;box-sizing:border-box"></div>
<svg class="i" style="left:2920.5px;top:1720.0px;" width="40" height="40" viewBox="0 0 24 24" fill="none" stroke="#a1a1aa" stroke-width="1.75" stroke-linecap="round" stroke-linejoin="round"><path d="m15 18-6-6 6-6"/></svg>
<div class="b" style="left:3001.0px;top:1701.0px;width:78.0px;height:78.0px;background:#fff;border:2px solid #eef2f6;border-radius:16px;box-sizing:border-box"></div>
<svg class="i" style="left:3020.5px;top:1720.0px;" width="40" height="40" viewBox="0 0 24 24" fill="none" stroke="#a1a1aa" stroke-width="1.75" stroke-linecap="round" stroke-linejoin="round"><path d="m9 18 6-6-6-6"/></svg>
<div class="b" style="left:3101.0px;top:1701.0px;width:78.0px;height:78.0px;background:#fff;border:2px solid #eef2f6;border-radius:16px;box-sizing:border-box"></div>
<svg class="i" style="left:3119.6px;top:1720.0px;" width="40" height="40" viewBox="0 0 24 24" fill="none" stroke="#a1a1aa" stroke-width="1.75" stroke-linecap="round" stroke-linejoin="round"><path d="m6 17 5-5-5-5"/><path d="m13 17 5-5-5-5"/></svg>
<svg class="i" style="left:40px;top:42px" width="40" height="26" viewBox="0 0 40 26"><path d="M1.8 3.5 L4.5 8.5" fill="none" stroke="#222" stroke-width="4.6" stroke-linecap="butt"/><path d="M1.8 3.5 L4.5 8.5" fill="none" stroke="#4f46e5" stroke-width="3" stroke-linecap="butt"/><path d="M1.8 22.5 L4.5 17.5" fill="none" stroke="#222" stroke-width="4.6" stroke-linecap="butt"/><path d="M1.8 22.5 L4.5 17.5" fill="none" stroke="#4f46e5" stroke-width="3" stroke-linecap="butt"/><path d="M31.5 13.2 L38 10.5 L38 15.8 Z" fill="#4f46e5" stroke="#222" stroke-width="0.8"/><path d="M9 16.6 C15 16.6 18.5 22.6 26 22.6 C30 22.6 32.5 21.8 34.5 19.6" fill="none" stroke="#222" stroke-width="5.800000000000001" stroke-linecap="butt"/><path d="M9 16.6 C15 16.6 18.5 22.6 26 22.6 C30 22.6 32.5 21.8 34.5 19.6" fill="none" stroke="#4f46e5" stroke-width="4.2" stroke-linecap="butt"/><path d="M20.5 16.4 C27 16.4 32 17 38.8 21.6" fill="none" stroke="#222" stroke-width="5.6" stroke-linecap="butt"/><path d="M20.5 16.4 C27 16.4 32 17 38.8 21.6" fill="none" stroke="#e3131b" stroke-width="4.0" stroke-linecap="butt"/><path d="M9 9.4 C15 9.4 18.5 3.4 26 3.4 C30 3.4 32.5 4.2 34.5 6.4" fill="none" stroke="#222" stroke-width="5.800000000000001" stroke-linecap="butt"/><path d="M9 9.4 C15 9.4 18.5 3.4 26 3.4 C30 3.4 32.5 4.2 34.5 6.4" fill="none" stroke="#4f46e5" stroke-width="4.2" stroke-linecap="butt"/><path d="M20.5 9.6 C27 9.6 32 9 38.8 4.4" fill="none" stroke="#222" stroke-width="5.6" stroke-linecap="butt"/><path d="M20.5 9.6 C27 9.6 32 9 38.8 4.4" fill="none" stroke="#e3131b" stroke-width="4.0" stroke-linecap="butt"/><path d="M17.5 3.2 C8 1.8 3.8 6 3.8 13 C3.8 20 8 24.2 18.5 23.2" fill="none" stroke="#222" stroke-width="6.4" stroke-linecap="butt"/><path d="M17.5 3.2 C8 1.8 3.8 6 3.8 13 C3.8 20 8 24.2 18.5 23.2" fill="none" stroke="#e3131b" stroke-width="4.8" stroke-linecap="butt"/></svg>
<div class="b" style="left:20px;top:1700px;width:80px;height:80px;border-radius:19px;overflow:hidden;background:linear-gradient(90deg,#c3c6c9,#d8dbde 65%,#c9ccd0)">
<svg width="80" height="80" viewBox="0 0 80 80" style="position:absolute;left:0;top:0">
<path d="M32 54 L53 54 L54 64 C48 71 38 72 31 66 Z" fill="#929599"/>
<ellipse cx="42" cy="37" rx="17" ry="23" fill="#a7aaae"/>
<path d="M44 14 C54 16 59.5 26 59.5 38 C59.5 51 53 60 44 60.5 Z" fill="#85888d"/>
<path d="M57 30 C61 30 61 41 57 42 Z" fill="#8a8d91"/>
<path d="M24 31 C23 14 31 4 42 4 C53 4 61 12 60 31 C58 22 54 17 46 15.5 C38 14.5 30 17 27.5 24 L26.5 31 Z" fill="#15181f"/>
<path d="M26 30.5 H58" stroke="#55585d" stroke-width="1.3"/>
<path d="M34 47 C38 50.5 44 50.5 47.5 46" stroke="#e3e3e3" stroke-width="2.4" fill="none"/>
<path d="M6 80 C10 72 20 67 31 64 C36 71 47 71 53 62 C63 64 73 70 78 80 Z" fill="#0b0f1c"/>
</svg></div>
<svg class="i" style="left:0;top:1770px" width="20" height="28" viewBox="0 0 20 28"><path d="M0 4 C2 14 6 22 12 28 L0 28 Z" fill="#bfc2c5"/></svg>
<svg class="i" style="left:3186px;top:1786px" width="12" height="12" viewBox="0 0 12 12"><path d="M12 2 C9 6 6 9 2 12 L12 12 Z" fill="#bfc2c5"/></svg>
</body></html>
